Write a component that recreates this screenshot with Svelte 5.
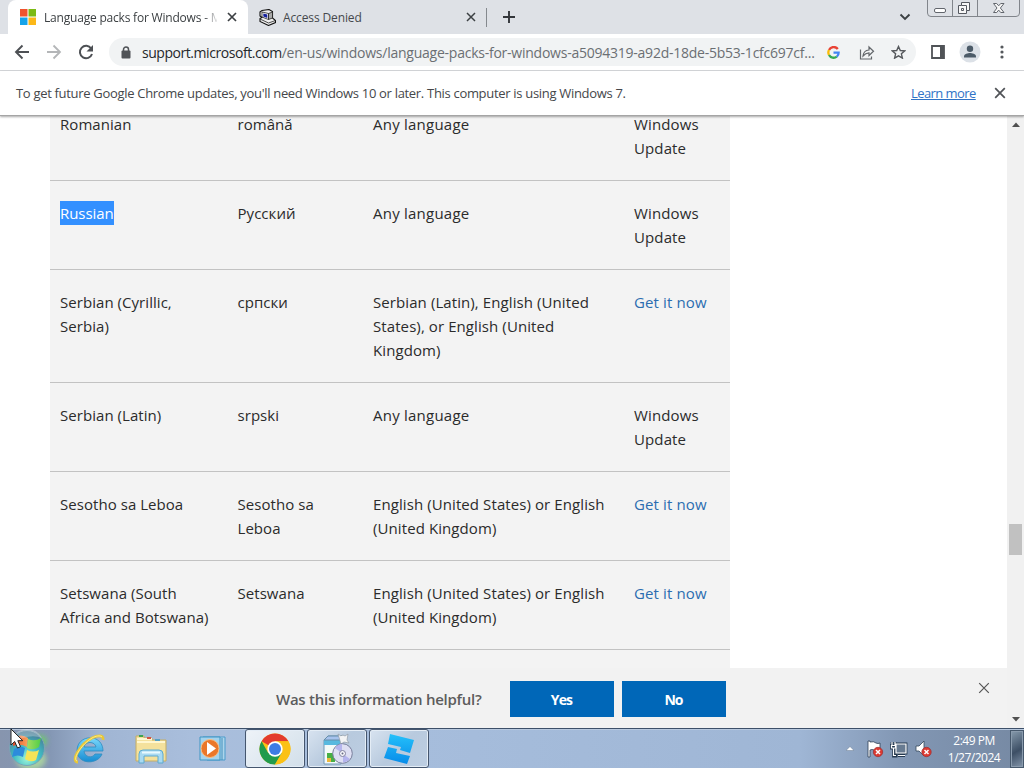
<script>
  const rows = [
    { name: ['Romanian'], native: ['română'], base: ['Any language'], get: ['Windows', 'Update'] },
    { name: ['Russian'], native: ['Русский'], base: ['Any language'], get: ['Windows', 'Update'], selected: true },
    { name: ['Serbian (Cyrillic,', 'Serbia)'], native: ['српски'], base: ['Serbian (Latin), English (United', 'States), or English (United', 'Kingdom)'], link: true },
    { name: ['Serbian (Latin)'], native: ['srpski'], base: ['Any language'], get: ['Windows', 'Update'] },
    { name: ['Sesotho sa Leboa'], native: ['Sesotho sa', 'Leboa'], base: ['English (United States) or English', '(United Kingdom)'], link: true },
    { name: ['Setswana (South', 'Africa and Botswana)'], native: ['Setswana'], base: ['English (United States) or English', '(United Kingdom)'], link: true },
    { name: [], native: [], base: [], get: [] }
  ];
</script>

{#snippet lines(items)}
  {#each items as line}<span class="line">{line}</span>{/each}
{/snippet}

{#snippet cross(size, weight, color)}
  <svg width={size} height={size} viewBox="0 0 10 10"><path d="M1 1 9 9M9 1 1 9" stroke={color} stroke-width={weight} fill="none" /></svg>
{/snippet}

<div class="screen">
  <header class="tabs">
    <div class="tab active">
      <svg class="fav" width="16" height="16" viewBox="0 0 16 16"><path fill="#f0532d" d="M0 0h7.5v7.5H0z"/><path fill="#7cba14" d="M8.5 0H16v7.5H8.5z"/><path fill="#14a3ea" d="M0 8.5h7.5V16H0z"/><path fill="#fcb818" d="M8.5 8.5H16V16H8.5z"/></svg>
      <span class="title">Language packs for Windows - M</span>
      {@render cross(10, 1.7, '#3c4043')}
    </div>
    <div class="tab second">
      <svg class="fav" width="17" height="17" viewBox="0 0 17 17"><path d="M1 3 3 1.500 10 .5l3.500 2V9l3 2.500v2L9.500 16.500 1 12.500v-3L3 8.500 1 7z" fill="#eee" stroke="#111" stroke-width="1.100"/><path d="m3 3 6.500 1.500v6L3 8z" fill="#fff" stroke="#222" stroke-width=".8"/><path d="m4.300 4.500 4 1v3.500l-4-1.500z" fill="#16219b"/><path d="m9.500 4.500 4-1.500v6l-4 1.500z" fill="#aaa" stroke="#222" stroke-width=".8"/><path d="m1 10 8.500 4 7-2.500" fill="none" stroke="#222" stroke-width=".8"/></svg>
      <span class="title denied">Access Denied</span>
      {@render cross(10, 1.5, '#3c4043')}
    </div>
    <i class="divider"></i>
    <svg class="plus" width="14" height="14" viewBox="0 0 14 14"><path d="M7 1v12M1 7h12" stroke="#33363a" stroke-width="1.9"/></svg>
    <svg class="chevron" width="12" height="8" viewBox="0 0 12 8"><path d="m1.500 1.500 4.500 4.500 4.500-4.500" stroke="#3c4043" stroke-width="1.9" fill="none"/></svg>
    <div class="wincontrols">
      <svg width="94" height="18" viewBox="0 0 94 18" fill="none">
        <path d="M.5 0v13q0 3.500 3.500 3.500h85q3.500 0 3.500-3.500V0M25.500 0v16.500M50.500 0v16.500" stroke="#81858b"/>
        <rect x="7.500" y="8.500" width="11" height="4" rx="1.500" stroke="#62666d" fill="#fff"/>
        <path d="M34.500 2.500h8v8h-3v3h-8v-8h3z" stroke="#555960" fill="#f7f7f7"/><path d="M34.500 5.500h5v5M34.500 8.500h2v2h-2z" stroke="#555960"/>
        <path d="M66.500 3.500h3.200l2 2.300 2-2.300H77l-3.600 4.500 3.600 4.500h-3.300l-2-2.400-2 2.400h-3.200L70 8z" stroke="#62666d" fill="#f7f7f7"/>
      </svg>
    </div>
  </header>

  <div class="toolbar">
    <svg class="back" width="16" height="16" viewBox="0 0 16 16"><path d="M15 8H2M8.500 1.500 2 8l6.500 6.500" stroke="#4d5054" stroke-width="1.9" fill="none"/></svg>
    <svg class="forward" width="16" height="16" viewBox="0 0 16 16"><path d="M1 8h13M7.500 1.500 14 8l-6.500 6.500" stroke="#b4b6b8" stroke-width="1.800" fill="none"/></svg>
    <svg class="reload" width="16" height="16" viewBox="0 0 16 16"><path d="M13.200 4.500A6.200 6.200 0 1 0 14 10" stroke="#4d5054" stroke-width="2" fill="none"/><path d="M15 1v6.500H8.500z" fill="#4d5054"/></svg>
    <div class="omnibox">
      <svg width="10" height="13" viewBox="0 0 10 13"><rect x=".5" y="4.500" width="9" height="8" rx="1" fill="#505357"/><path d="M2.500 5V3.500a2.500 2.500 0 0 1 5 0V5" stroke="#505357" stroke-width="1.500" fill="none"/></svg>
      <span class="url"><b>support.microsoft.com</b><span>/en-us/windows/language-packs-for-windows-a5094319-a92d-18de-5b53-1cfc697cf...</span></span>
      <svg class="google" width="13" height="13" viewBox="0 0 13 13" fill="none" stroke-width="2.300"><path d="M10.800 3A5.200 5.200 0 0 0 2 4" stroke="#e94335"/><path d="M2 4a5.300 5.300 0 0 0 0 5" stroke="#fbbc05"/><path d="M2 9a5.200 5.200 0 0 0 7.800 1.600" stroke="#34a853"/><path d="M9.800 10.600A5 5 0 0 0 11.600 6.700H6.500" stroke="#4285f4"/></svg>
      <svg class="share" width="16" height="15" viewBox="0 0 16 15"><path d="M1.500 4.500V14h11v-2.500M4 11q.5-5.500 6-6V2l4.500 4.300L10 10.500V7.800Q6.500 8 4 11z" stroke="#63676b" stroke-width="1.200" fill="none"/></svg>
      <svg class="star" width="15" height="14" viewBox="0 0 15 14"><path d="m7.500 1.500 1.800 4 4.400.4-3.300 2.900 1 4.300-3.900-2.300-3.900 2.300 1-4.300-3.300-2.900 4.400-.4z" stroke="#55585c" stroke-width="1.400" fill="none"/></svg>
    </div>
    <svg class="panel" width="14" height="14" viewBox="0 0 14 14"><path d="M1 1h12v12H1z" stroke="#505357" stroke-width="1.800" fill="none"/><path d="M9 1h4v12H9z" fill="#505357"/></svg>
    <svg class="avatar" width="22" height="22" viewBox="0 0 22 22"><circle cx="11" cy="11" r="10.500" fill="#dce1e7"/><circle cx="11" cy="7.800" r="3.200" fill="#4c5b68"/><path d="M5 16.500v-1.300c0-2.300 4-3.200 6-3.200s6 .9 6 3.200v1.300z" fill="#4c5b68"/></svg>
    <svg class="dots" width="4" height="14" viewBox="0 0 4 14" fill="#55585c"><circle cx="2" cy="2" r="1.600"/><circle cx="2" cy="7" r="1.600"/><circle cx="2" cy="12" r="1.600"/></svg>
  </div>

  <div class="infobar">
    <span class="notice">To get future Google Chrome updates, you'll need Windows 10 or later. This computer is using Windows 7.</span>
    <span class="learn">Learn more</span>
    {@render cross(12, 1.45, '#505357')}
  </div>

  <main>
    <div class="page">
      <div class="viewport">
        <div class="table">
          {#each rows as row}
            <div class="row">
              <div class="cell" class:selected={row.selected}>{@render lines(row.name)}</div>
              <div class="cell native">{@render lines(row.native)}</div>
              <div class="cell base">{@render lines(row.base)}</div>
              <div class="cell source">{#if row.link}<span class="line get">Get it now</span>{:else}{@render lines(row.get)}{/if}</div>
            </div>
          {/each}
        </div>
      </div>
      <div class="feedback">
        <span class="question">Was this information helpful?</span>
        <button>Yes</button>
        <button>No</button>
        <span class="dismiss">{@render cross(12, 1, '#555')}</span>
      </div>
    </div>
    <div class="scrollbar">
      <svg width="8" height="5" viewBox="0 0 8 5"><path d="M0 5 4 .5 8 5z" fill="#505050"/></svg>
      <i class="thumb"></i>
      <svg class="down" width="8" height="5" viewBox="0 0 8 5"><path d="M0 0 4 4.500 8 0z" fill="#505050"/></svg>
    </div>
  </main>

  <footer>
    <svg class="orb" width="52" height="39" viewBox="0 0 52 39">
      <defs>
        <radialGradient id="orb" cx=".5" cy=".8" r=".75"><stop stop-color="#9ff5d9"/><stop offset=".5" stop-color="#3fbcc4"/><stop offset="1" stop-color="#4a7c96"/></radialGradient>
        <linearGradient id="or" x2="1"><stop stop-color="#e44b28"/><stop offset="1" stop-color="#f9a55c"/></linearGradient>
        <linearGradient id="gr" x2="1"><stop stop-color="#a5dc62"/><stop offset="1" stop-color="#4fce45"/></linearGradient>
        <filter id="glow" x="-.4" y="-.4" width="1.800" height="1.800"><feGaussianBlur stdDeviation="2.500"/></filter>
      </defs>
      <ellipse cx="31" cy="30" rx="15" ry="11" fill="#b6e69b" filter="url(#glow)" opacity=".7"/>
      <ellipse cx="40" cy="12" rx="7" ry="6" fill="#68d958" filter="url(#glow)" opacity=".7"/>
      <circle cx="27" cy="19" r="17.500" fill="url(#orb)" stroke="#7da3b6"/>
      <path d="M13 9q8-5 15 0l-1 9q-7-4-14-1z" fill="url(#or)"/>
      <path d="M28 10q7 3 13-1l-2 9q-6 4-12 1z" fill="url(#gr)"/>
      <path d="M14 20q6-4 11-1l-2 9q-5-3-11 0z" fill="#2c8bdc"/>
      <path d="M27 21q6 3 12 0l-3 10q-5 3-11-1z" fill="#f5e457"/>
      <path d="M12 9A17 17 0 0 1 42 9Q29 4 12 14z" fill="#fff" opacity=".28"/>
    </svg>
    <svg class="ie" width="32" height="32" viewBox="0 0 32 32"><defs><linearGradient id="ieb" x2="0" y2="1"><stop stop-color="#79d7fb"/><stop offset="1" stop-color="#168cd2"/></linearGradient></defs><path d="M30 18H11c.4 6 8 8 11 3h7C25 32 4 32 4 17.500 4 1 30 0 30 18zM11 14h12c-1-6-11-6-12 0z" fill="url(#ieb)" stroke="#2f8cbf" stroke-width=".8"/><path d="M5 29C-3 29 7 11 19 5c6-3 12-3 11 2" fill="none" stroke="#e8c737" stroke-width="2.800"/><path d="M4 28C-1 26 9 11 19 5c4-2 8-3 10-1" fill="none" stroke="#fff2a0" stroke-width=".8"/></svg>
    <svg class="folder" width="32" height="32" viewBox="0 0 32 32"><path d="M1 3h8v2h8v2h14v21H1z" fill="#f4e19c" stroke="#c5ad64"/><path d="M2 9h28M2 6h15" stroke="#fff7d0" stroke-width="2"/><path d="M4 2h4v2H4z" fill="#3da352"/><path d="M12 4h4v2h-4z" fill="#d65342"/><path d="M20 6h5v2h-5z" fill="#54a1c5"/><path d="M4 30v-9q0-4 4-4h16q4 0 4 4v9h-5v-7H9v7z" fill="#a9daf1" stroke="#5caad0"/><path d="M7 19.500h18" stroke="#e9faff" stroke-width="2"/></svg>
    <svg class="media" width="28" height="28" viewBox="0 0 28 28"><path d="M4 2h22v23H8z" fill="#acd5eb" stroke="#4a9bcb"/><path d="M23 3v22" stroke="#438ebb"/><path d="M1 2h20v23H1z" fill="#a4d3ed" stroke="#3f96c5"/><circle cx="11" cy="13.500" r="9" fill="#ea772a" stroke="#f9bd82"/><path d="m8 7 9 6.500L8 20z" fill="#fff"/></svg>
    <div class="task chrome-task">
      <svg width="32" height="32" viewBox="0 0 32 32"><circle cx="16" cy="16" r="15.500" fill="#fbc116"/><path d="M16 16 2.600 8.200A15.500 15.500 0 0 1 29.400 8.200H16z" fill="#e33b2e"/><path d="M2.600 8.200A15.500 15.500 0 0 0 16 31.500L22.800 20 16 16 9.200 20z" fill="#229b4c"/><path d="M29.400 8.200H16L22.800 20 16 31.500A15.500 15.500 0 0 0 29.400 8.200z" fill="#fbc116"/><circle cx="16" cy="16" r="7.700" fill="#fff"/><circle cx="16" cy="16" r="6" fill="#3d7ce5"/></svg>
    </div>
    <div class="task">
      <svg width="32" height="32" viewBox="0 0 32 32"><path d="m3 7 4-4h16l-3 4v24H3z" fill="#f1f8fc" stroke="#7199b5"/><path d="M3 7h16v5H3z" fill="#58b9df"/><path d="m7 3-4 4h16l4-4z" fill="#a7c3ed" stroke="#668eaa"/><path d="M5 13h12v16H5z" fill="#f4faf6"/><path d="M6 20h8v9H6z" fill="#48af45"/><path d="M6 25h4v4H6z" fill="#edb83e"/><path d="M17 1q3 3 5 1l2 1 3-2-1 6 2 3-5-1-3 2z" fill="#f3f4f5" stroke="#929ca7" stroke-width=".7"/><circle cx="21.500" cy="20.500" r="9.800" fill="#dedff3" stroke="#777e9a"/><path d="m21 20-7-5q3-4 7-4zm1 1 7 5q-3 4-7 3z" fill="#b4b4ed"/><circle cx="21.500" cy="20.500" r="3" fill="#f6f6fb" stroke="#82829f"/><circle cx="21.500" cy="20.500" r="1" fill="#686b83"/></svg>
    </div>
    <div class="task">
      <svg width="32" height="32" viewBox="0 0 32 32"><defs><linearGradient id="studio" x2="0" y2="1"><stop stop-color="#25c1fa"/><stop offset="1" stop-color="#078be9"/></linearGradient></defs><path d="m7 1 24 6-4 13-10-3 1-3-13-3zM5 14l9 2-1 4 14 3-3 8-23-6z" fill="url(#studio)"/></svg>
    </div>
    <div class="tray">
      <svg width="8" height="5" viewBox="0 0 8 5"><path d="M0 4.500 4 .5l4 4z" fill="#fff" stroke="#536780" stroke-width=".4"/></svg>
      <svg class="flag" width="18" height="18" viewBox="0 0 18 18"><path d="M2 1h2v1q4-1 6 1 2 1 4 0v8q-4 1-6-1-2-1-4 0v7H2z" fill="#fff" stroke="#2e4055" stroke-width=".8"/><circle cx="12" cy="12" r="4.700" fill="#dc3a32" stroke="#9d2b2e" stroke-width=".7"/><path d="m10 10 4 4m0-4-4 4" stroke="#fff" stroke-width="1.500"/></svg>
      <svg class="net" width="18" height="18" viewBox="0 0 18 18" fill="none"><path d="M6 4h10v9H6zM8 15.500h7M2 2v4M5 2v4M1.500 5.500h4V8h-4zM3.500 8v8h4" stroke="#24384e" stroke-width="2.800"/><path d="M6 4h10v9H6z" fill="#687b91"/><path d="M6 4h10v9H6zM8 15.500h7M2 2v4M5 2v4M1.500 5.500h4V8h-4zM3.500 8v7.500H6" stroke="#fff" stroke-width="1.200"/></svg>
      <svg class="sound" width="18" height="18" viewBox="0 0 18 18"><path d="M1 6h3l5-5v15l-5-5H1z" fill="#fff" stroke="#33465c" stroke-width=".8"/><circle cx="11.500" cy="12" r="4.700" fill="#dc3a32" stroke="#9d2b2e" stroke-width=".7"/><path d="m9.500 10 4 4m0-4-4 4" stroke="#fff" stroke-width="1.500"/></svg>
      <div class="clock"><span>2:49 PM</span><span class="date">1/27/2024</span></div>
      <i class="peek"></i>
    </div>
  </footer>
  <svg class="cursor" width="14" height="21" viewBox="0 0 14 21"><path d="M1 1v16l3.700-3.500L7.500 20l3-1.300-2.700-6h5z" fill="#fff" stroke="#222" stroke-width="1"/></svg>
</div>

<style>
  :global(body) { margin: 0; overflow: hidden; }
  .screen { position: relative; width: 1024px; height: 768px; display: flex; flex-direction: column; overflow: hidden; background: #fff; font-family: "Open Sans", "Noto Sans", sans-serif; color: #2b2b2b; }
  svg { display: block; flex: none; }
  .line, .title, .url, .notice, .learn, .question { white-space: nowrap; }

  .tabs { height: 34px; flex: none; display: flex; align-items: center; background: #dee1e6; }
  .tab { height: 34px; display: flex; align-items: center; box-sizing: border-box; font-size: 12px; color: #45484c; }
  .active { width: 240px; margin-left: 8px; padding-left: 12px; background: #fff; border-radius: 8px 8px 0 0; color: #3c4043; }
  .title { overflow: hidden; letter-spacing: -.13px; }
  .active .title { width: 173px; margin: 0 10px 0 8px; letter-spacing: -.2px; mask-image: linear-gradient(90deg, #000 160px, transparent 175px); }
  .second { width: 238px; padding-left: 11px; }
  .title.denied { width: 175px; margin: 0 8px 0 7px; }
  .divider { width: 1px; height: 19px; background: #85898e; }
  .plus { margin-left: 15px; }
  .chevron { margin-left: 383px; }
  .wincontrols { align-self: flex-start; margin-left: 16px; }

  .toolbar { height: 36px; flex: none; display: flex; align-items: center; border-bottom: 1px solid #d6d8db; background: #fff; }
  .back { margin-left: 14px; }
  .forward { margin-left: 16px; }
  .reload { margin-left: 16px; }
  .omnibox { width: 807px; height: 28px; margin-left: 15px; border-radius: 14px; background: #f1f3f4; display: flex; align-items: center; box-sizing: border-box; padding-left: 12px; }
  .url { width: 675px; margin-left: 11px; font-size: 14px; color: #6b6f73; letter-spacing: -.24px; }
  .url b { color: #25282b; font-weight: 400; letter-spacing: -.45px; }
  .google { margin-left: 10px; }
  .share { margin-left: 19px; }
  .star { margin-left: 16px; }
  .panel { margin-left: 15px; }
  .avatar { margin-left: 14px; }
  .dots { margin-left: 19px; }

  .infobar { height: 44px; flex: none; display: flex; align-items: center; position: relative; z-index: 1; padding-left: 16px; font-size: 13px; color: #45474a; background: #fff; border-bottom: 1px solid #a5a5a5; box-shadow: 0 1px 2px #0005; }
  .notice { width: 895px; letter-spacing: -.31px; }
  .learn { width: max-content; margin-right: 18px; color: #2f73c6; text-decoration: underline; letter-spacing: -.57px; }

  main { flex: 1; min-height: 0; display: flex; }
  .page { width: 1007px; display: flex; flex-direction: column; min-height: 0; }
  .viewport { height: 552px; overflow: hidden; padding-left: 50px; }
  .table { width: 680px; margin-top: -24px; background: #f3f3f3; }
  .row { display: grid; grid-template-columns: 177px 136px 261px 106px; min-height: 89px; box-sizing: border-box; padding: 20px 0; border-bottom: 1px solid #c2c2c2; }
  .cell { padding-left: 10px; font-size: 15px; line-height: 24px; letter-spacing: .05px; }
  .native { padding-left: 10.500px; }
  .base { letter-spacing: .09px; }
  .base .line:only-child { letter-spacing: .23px; }
  .source { letter-spacing: .12px; }
  .line { display: block; width: max-content; }
  .selected .line { background: #3390ff; color: #fff; letter-spacing: -.05px; }
  .get { color: #2b6db0; letter-spacing: .13px; }
  .feedback { flex: 1; display: flex; align-items: center; background: #f2f2f2; }
  .question { width: 234px; margin: 2px 0 0 276px; font-size: 15px; font-weight: 600; color: #5c5c5c; letter-spacing: -.26px; }
  button { width: 104px; height: 36px; margin: 2px 8px 0 0; padding: 0 1px 0 0; border: 0; background: #0067b8; color: #fff; font: 700 14px "Open Sans", sans-serif; letter-spacing: -.9px; }
  .dismiss { margin: 0 0 20px 244px; }
  .scrollbar { width: 17px; display: flex; flex-direction: column; align-items: center; padding: 6px 0; box-sizing: border-box; background: #f1f1f1; }
  .thumb { width: 13px; height: 31px; margin-top: 397px; background: #c1c1c1; }
  .down { margin-top: auto; }

  footer { height: 40px; flex: none; display: flex; align-items: center; border-top: 1px solid #3d5069; box-sizing: border-box; background: linear-gradient(90deg, #8795ae 0, #8497b4 50px, #a0b5d3 100px, #a9bedc 190px, #a6bddc 420px, #9fb6d5 800px, #8297b4 900px, #7689a3 1024px); box-shadow: inset 0 1px #b8c9df; }
  .ie { margin-left: 21px; }
  .folder { margin-left: 30px; }
  .media { margin-left: 32px; }
  .task { width: 60px; height: 39px; margin-right: 2px; box-sizing: border-box; display: flex; align-items: center; justify-content: center; border: 1px solid #45566e; border-radius: 3px; background: linear-gradient(135deg, #d8e3f0, #b8cade 50%, #bdcee2); box-shadow: inset 0 0 0 1px #e4edf6; }
  .chrome-task { margin-left: 18px; background: linear-gradient(135deg, #eef3f8, #d2dfea); }
  .tray { margin-left: auto; height: 39px; display: flex; align-items: center; }
  .flag { margin-left: 12px; }
  .net { margin-left: 6px; }
  .sound { margin-left: 7px; }
  .clock { width: 60px; margin-left: 11px; display: flex; flex-direction: column; align-items: center; color: #fff; font-size: 12px; line-height: 17px; letter-spacing: -.5px; white-space: nowrap; }
  .peek { width: 14px; height: 38px; box-sizing: border-box; margin-left: 6px; border: 1px solid #46586c; background: linear-gradient(150deg, #879bad, #3d4f65 55%, #8395aa); box-shadow: inset 0 0 0 1px #8a9bad; }
  .cursor { position: absolute; left: 10px; top: 728px; }
</style>
